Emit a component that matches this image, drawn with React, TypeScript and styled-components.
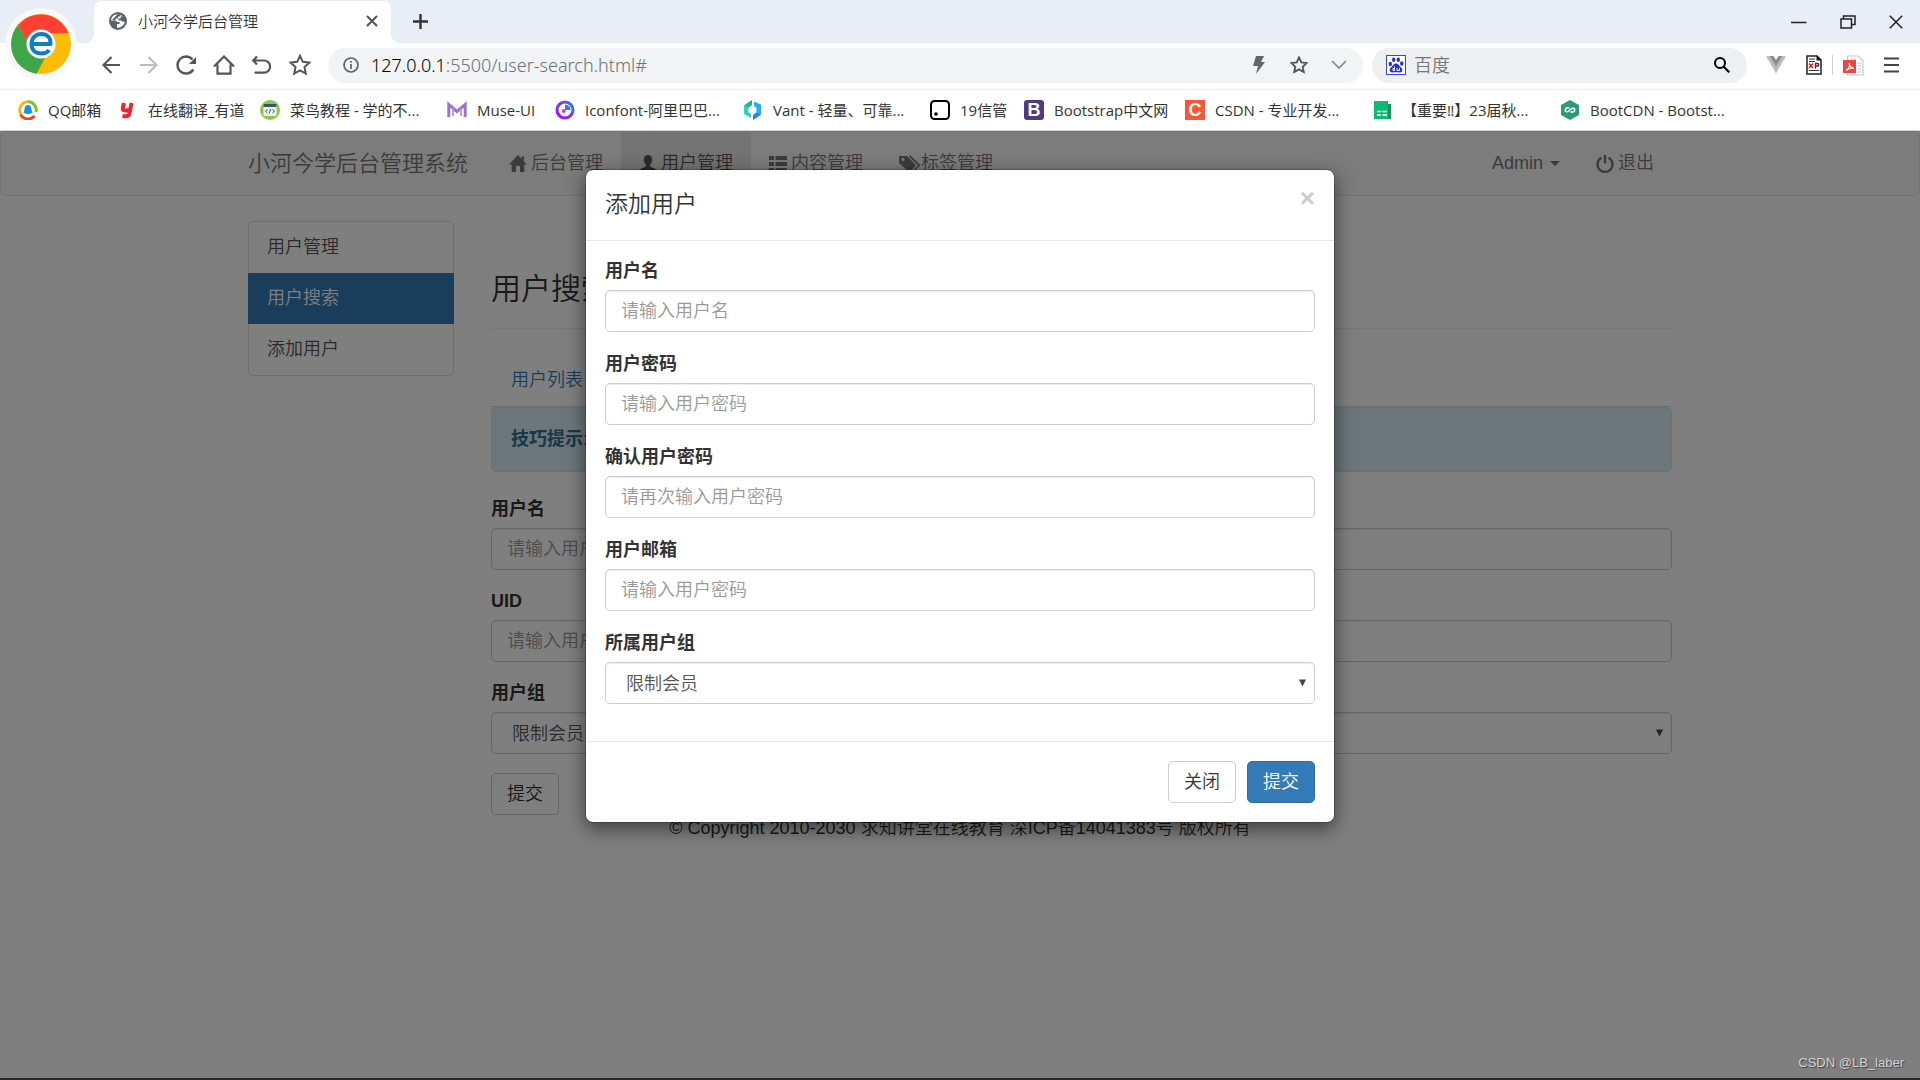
import React from "react";
import styled, { createGlobalStyle } from "styled-components";

const GlobalStyle = createGlobalStyle`
  *, *::before, *::after { box-sizing: border-box; }
  html, body { margin: 0; padding: 0; }
  body { background: #fff; }
  button, input, select { font: inherit; margin: 0; }
  svg { display: block; flex: none; }
`;

const uiFont = `"Open Sans", "Noto Sans CJK SC", sans-serif`;
const pageFont = `"Liberation Sans", "Noto Sans CJK SC", sans-serif`;

const Browser = styled.div`
  position: relative;
  min-height: 100vh;
  display: flex;
  flex-direction: column;
  font-family: ${uiFont};
  overflow: hidden;
`;

/* ---------- window chrome ---------- */

const LogoBadge = styled.div`
  position: absolute;
  z-index: 3;
  left: 5px;
  top: 8px;
  width: 72px;
  height: 72px;
  padding: 6px;
  border-radius: 50%;
  background: #f7f8fb;
`;

const TabStrip = styled.header`
  display: flex;
  align-items: flex-end;
  height: 43px;
  padding-left: 94px;
  background: #e9edf6;
`;

const BrowserTab = styled.div`
  position: relative;
  display: flex;
  align-items: center;
  width: 297px;
  height: 42px;
  padding: 0 13px 2px 15px;
  border-radius: 8px 8px 0 0;
  background: #fff;
  &::before,
  &::after {
    content: "";
    position: absolute;
    bottom: 0;
    width: 9px;
    height: 9px;
  }
  &::before {
    right: 100%;
    background: radial-gradient(circle at 0 0, transparent 9px, #fff 9px);
  }
  &::after {
    left: 100%;
    background: radial-gradient(circle at 100% 0, transparent 9px, #fff 9px);
  }
`;

const TabTitle = styled.span`
  flex: 1;
  margin-left: 11px;
  font-size: 15px;
  line-height: 20px;
  font-weight: 350;
  color: #333;
`;

const IconButton = styled.button<{ $w?: number }>`
  display: flex;
  align-items: center;
  justify-content: center;
  width: ${(p) => p.$w ?? 38}px;
  height: 36px;
  padding: 0;
  border: 0;
  background: transparent;
`;

const NewTab = styled(IconButton)`
  margin-left: 10px;
  height: 42px;
  padding-bottom: 2px;
`;

const WindowButtons = styled.div`
  display: flex;
  margin-left: auto;
  height: 42px;
  align-items: center;
`;

const Toolbar = styled.div`
  display: flex;
  align-items: center;
  height: 47px;
  padding: 0 11px 2px 92px;
  border-bottom: 1px solid #efefef;
  background: #fff;
`;

const Omnibox = styled.div`
  display: flex;
  flex: 1;
  align-items: center;
  height: 35px;
  margin-left: 9px;
  padding: 0 4px 0 15px;
  border-radius: 18px;
  background: #f1f3f4;
`;

const Url = styled.span`
  flex: 1;
  margin-left: 12px;
  font-family: "Noto Sans", sans-serif;
  font-size: 18px;
  line-height: 24px;
  font-weight: 300;
  color: #6c7278;
  b {
    font-weight: 300;
    color: #000;
  }
`;

const SearchBox = styled.label`
  display: flex;
  align-items: center;
  width: 375px;
  height: 35px;
  margin: 0 9px;
  padding: 0 5px 0 14px;
  border-radius: 18px;
  background: #eeeff1;
`;

const SearchInput = styled.input`
  flex: 1;
  min-width: 0;
  margin-left: 8px;
  padding: 0;
  border: 0;
  outline: 0;
  background: transparent;
  font-size: 18px;
  font-weight: 350;
  &::placeholder {
    color: #777;
    opacity: 1;
  }
`;

const ToolDivider = styled.i`
  width: 1px;
  height: 20px;
  background: #ccc;
`;

const Bookmarks = styled.nav`
  display: flex;
  align-items: center;
  height: 41px;
  padding-left: 18px;
  border-bottom: 1px solid #d5d5d5;
  background: #fff;
`;

const Bookmark = styled.a<{ $w: number }>`
  display: flex;
  align-items: center;
  flex: 0 0 ${(p) => p.$w}px;
  gap: 10px;
  font-size: 15px;
  line-height: 20px;
  font-weight: 400;
  white-space: nowrap;
  text-decoration: none;
  color: #333;
`;

/* ---------- page ---------- */

const Page = styled.main`
  position: relative;
  flex: 1;
  background: #fff;
  font-family: ${pageFont};
  font-size: 18px;
  line-height: 25px;
  font-weight: 350;
  color: #333;
`;

const Container = styled.div`
  max-width: 1462px;
  margin: 0 auto;
  padding: 0 19px;
`;

const Navbar = styled.nav`
  margin-bottom: 25px;
  border: 1px solid #e7e7e7;
  border-radius: 5px;
  background: #f8f8f8;
`;

const NavInner = styled(Container)`
  display: flex;
  align-items: stretch;
  height: 63px;
`;

const Brand = styled.a`
  display: flex;
  align-items: center;
  padding-right: 23px;
  font-size: 22px;
  text-decoration: none;
  white-space: nowrap;
  color: #777;
`;

const NavLink = styled.a<{ $active?: boolean }>`
  display: flex;
  align-items: center;
  gap: 4px;
  padding: 0 18px;
  text-decoration: none;
  white-space: nowrap;
  color: ${(p) => (p.$active ? "#555" : "#777")};
  background: ${(p) => (p.$active ? "#e7e7e7" : "transparent")};
`;

const NavRight = styled.div`
  display: flex;
  margin-left: auto;
`;

const Caret = styled.i`
  margin-left: 3px;
  border: 5px solid transparent;
  border-top-color: currentColor;
  border-bottom-width: 0;
`;

const Columns = styled(Container)`
  display: grid;
  grid-template-columns: 206px minmax(0, 1fr);
  gap: 37px;
  align-items: start;
`;

const ListGroup = styled.div`
  border: 1px solid #ddd;
  border-radius: 5px;
`;

const ListItem = styled.a<{ $active?: boolean }>`
  display: block;
  margin: 0 -1px;
  padding: 13px 19px;
  text-decoration: none;
  color: ${(p) => (p.$active ? "#fff" : "#555")};
  background: ${(p) => (p.$active ? "#337ab7" : "transparent")};
`;

const PageTitle = styled.h1`
  margin: 51px 0 26px;
  padding-bottom: 23px;
  border-bottom: 1px solid #eee;
  font-size: 30px;
  line-height: 33px;
  font-weight: 350;
`;

const Tabs = styled.div`
  display: flex;
  border-bottom: 1px solid #ddd;
`;

const TabLink = styled.a`
  padding: 13px 20px;
  text-decoration: none;
  color: #337ab7;
`;

const Alert = styled.div`
  margin-bottom: 25px;
  padding: 19px;
  border: 1px solid #bce8f1;
  border-radius: 5px;
  background: #d9edf7;
  font-weight: 700;
  color: #31708f;
`;

const Field = styled.div`
  margin-bottom: 19px;
`;

const Label = styled.label`
  display: block;
  margin-bottom: 6px;
  font-weight: 700;
`;

const TextInput = styled.input`
  display: block;
  width: 100%;
  height: 42px;
  padding: 0 15px;
  border: 1px solid #ccc;
  border-radius: 5px;
  background: #fff;
  box-shadow: inset 0 1px 1px rgba(0, 0, 0, 0.075);
  color: #555;
  &::placeholder {
    color: #999;
    opacity: 1;
  }
`;

const SelectWrap = styled.div`
  position: relative;
  svg {
    position: absolute;
    right: 9px;
    top: 17px;
    pointer-events: none;
  }
`;

const Select = styled.select`
  display: block;
  width: 100%;
  height: 42px;
  padding: 2px 20px 0;
  border: 1px solid #ccc;
  border-radius: 5px;
  appearance: none;
  background: #fff;
  box-shadow: inset 0 1px 1px rgba(0, 0, 0, 0.075);
  color: #555;
`;

const Button = styled.button<{ $primary?: boolean }>`
  height: 42px;
  padding: 0 15px;
  border: 1px solid ${(p) => (p.$primary ? "#2e6da4" : "#ccc")};
  border-radius: 5px;
  background: ${(p) => (p.$primary ? "#337ab7" : "#fff")};
  color: ${(p) => (p.$primary ? "#fff" : "#333")};
`;

const Footer = styled.footer`
  margin-top: 1px;
  text-align: center;
`;

/* ---------- dialog ---------- */

const Backdrop = styled.div`
  position: absolute;
  inset: 0;
  display: flex;
  justify-content: center;
  align-items: flex-start;
  padding-top: 38px;
  background: rgba(0, 0, 0, 0.5);
`;

const Dialog = styled.section`
  width: 750px;
  border: 1px solid rgba(0, 0, 0, 0.2);
  border-radius: 8px;
  background: #fff;
  background-clip: padding-box;
  box-shadow: 0 6px 19px rgba(0, 0, 0, 0.5);
`;

const DialogHeader = styled.div`
  display: flex;
  align-items: flex-start;
  justify-content: space-between;
  height: 71px;
  padding: 19px;
  border-bottom: 1px solid #e5e5e5;
`;

const DialogTitle = styled.h2`
  margin: 0;
  font-size: 23px;
  line-height: 31px;
  font-weight: 350;
`;

const CloseButton = styled.button`
  padding: 0;
  border: 0;
  background: transparent;
  font-size: 26px;
  line-height: 18px;
  font-weight: 700;
  color: #ccc;
`;

const DialogBody = styled.div`
  padding: 18px 19px 17px;
  ${Field} { margin-bottom: 20px; }
`;

const DialogFooter = styled.div`
  display: flex;
  justify-content: flex-end;
  gap: 11px;
  padding: 19px;
  border-top: 1px solid #e5e5e5;
`;

const Watermark = styled.span`
  position: absolute;
  right: 16px;
  bottom: 5px;
  font-size: 13px;
  line-height: 20px;
  color: #d2d2d2;
  text-shadow: 1px 1px 1px #444;
`;

const Taskbar = styled.div`
  height: 2px;
  background: #29292c;
`;

/* ---------- icons ---------- */

const stroke = (color: string, width = 2) => ({
  fill: "none",
  stroke: color,
  strokeWidth: width,
});

const STAR = "M11 1.8l2.8 6 6.6.8-4.9 4.5 1.3 6.5L11 16.400l-5.800 3.200 1.300-6.500L1.600 8.600l6.600-.8z";

const BrowserLogo = () => (
  <svg width="60" height="60" viewBox="0 0 60 60">
    <circle cx="30" cy="30" r="30" fill="#fbbc05" />
    <path d="M7 11A30 30 0 0 1 57.500 19H30L16 27z" fill="#ff4033" />
    <path d="M7 11A30 30 0 0 0 25.500 59.700L34 44 16 27z" fill="#3fa648" />
    <circle cx="30" cy="30" r="14.500" fill="#fff" />
    <path d="M20.500 30H39.500M39.300 31.500C40.500 23.500 36 20 30.300 20 24.500 20 20.500 24 20.500 30S24.500 39.500 30.500 39.500C34 39.500 36.500 38.500 38 36" {...stroke("#0b7fc0", 4)} />
  </svg>
);

const Globe = () => (
  <svg width="18" height="18" viewBox="0 0 18 18">
    <circle cx="9" cy="9" r="9" fill="#5f6368" />
    <path d="M8.500 2.200C5 2 2.200 5 2.100 8.500H6.500C7.500 8.500 7.500 10 8.500 10H10.500V12H8V15.700C12 16.200 15.500 13 15.700 9.800H13.500L12 8.500H9.500V6.500C11.500 6.500 12 6 12 4.200L14 4.500C12.500 3 10.500 2.200 8.500 2.200z" fill="#fff" />
    <path d="M8.500 2.200H11.500V4.500H9V6.500H6.500V8H3z" fill="#5f6368" />
  </svg>
);

const QQMail = () => (
  <svg width="20" height="20" viewBox="0 0 20 20">
    <path d="M3.500 15A8.200 8.200 0 0 1 9.500 1.800" {...stroke("#fdb515", 3)} />
    <path d="M9.500 1.800A8.200 8.200 0 0 1 18 12" {...stroke("#7cc51f", 3)} />
    <path d="M2.500 14.500A8.500 8.500 0 0 0 16.500 16" {...stroke("#fb4412", 3)} />
    <path d="M10 5C7 5 6.500 8 6.400 10L5.300 13.300H7.500C8.500 14.500 11.500 14.500 12.500 13.300H14.700L13.600 10C13.500 8 13 5 10 5z" fill="#1793df" />
  </svg>
);

const Youdao = () => (
  <svg width="20" height="20" viewBox="0 0 20 20">
    <path d="M6 3L4.800 8.200C4.500 10.500 7 11 11.200 10M13.600 3L11.300 14C11 16.500 8 16.600 4.500 16" {...stroke("#ef2433", 4)} />
  </svg>
);

const Runoob = () => (
  <svg width="20" height="20" viewBox="0 0 20 20">
    <circle cx="10" cy="10" r="10" fill="#8cc84b" />
    <rect x="3.500" y="4" width="13" height="12" rx="1" fill="#eef3ee" />
    <rect x="3.500" y="4" width="13" height="3" fill="#3b5563" />
    <path d="M7.500 9.500L5.500 11.200 7.500 13M12.500 9.500L14.500 11.200 12.500 13M10.800 9L9.200 13.500" {...stroke("#3b5563", 1)} />
  </svg>
);

const Muse = () => (
  <svg width="20" height="20" viewBox="0 0 20 20">
    <path d="M1.800 17V4.500L10 11.500 18.200 4.500V17" {...stroke("#9a72cf", 3)} />
    <path d="M6 16V8.500M14 16V8.500" {...stroke("#b79be0", 2)} />
  </svg>
);

const Iconfont = () => (
  <svg width="20" height="20" viewBox="0 0 20 20">
    <defs>
      <linearGradient id="iconfontRing" x1="0" y1="1" x2="1" y2="0">
        <stop offset="0" stopColor="#b400ff" />
        <stop offset="1" stopColor="#2c7bf2" />
      </linearGradient>
    </defs>
    <circle cx="10" cy="10" r="8" {...stroke("url(#iconfontRing)", 3)} />
    <path d="M10 4.500V10H15.500A5.500 5.500 0 0 0 10 4.500z" fill="#2c7bf2" />
    <circle cx="8.700" cy="11" r="2" fill="#ff2fa8" />
  </svg>
);

const Vant = () => (
  <svg width="20" height="20" viewBox="0 0 20 20">
    <path d="M1 5.500L9 0V5L5.500 7.500V12L8 14V18L1 14z" fill="#35d2b0" />
    <path d="M18 4.500V14.500L10 20V15L13.500 12.500V8L11 6V1.500z" fill="#22aef5" />
    <path d="M1 5.500L9 0V5L5.500 7.500z" fill="#18b98f" />
    <path d="M10 20V15L13.500 12.500 18 14.500z" fill="#2a86dd" />
  </svg>
);

const BoxDot = () => (
  <svg width="20" height="20" viewBox="0 0 20 20">
    <rect x="1" y="1" width="18" height="18" rx="3.500" {...stroke("#000")} />
    <circle cx="6" cy="14" r="1.800" />
  </svg>
);

const LetterTile = styled.span<{ $bg: string; $r: number }>`
  width: 20px;
  height: 20px;
  border-radius: ${(p) => p.$r}px;
  background: ${(p) => p.$bg};
  font-family: "Liberation Sans", sans-serif;
  font-size: 18px;
  line-height: 20px;
  font-weight: 700;
  text-align: center;
  color: #fff;
`;

const Sheet = () => (
  <svg width="20" height="20" viewBox="0 0 20 20">
    <path d="M2 1H16V4H19V19H2z" fill="#0a9a56" />
    <path d="M2 1H16V19H2z" fill="#0cbb78" />
    <path d="M5 11.500H9M10.500 11.500H15M5 15H9M10.500 15H15" {...stroke("#fff", 1.5)} />
  </svg>
);

const BootCdn = () => (
  <svg width="20" height="20" viewBox="0 0 20 20">
    <path d="M10 0L19 5V15L10 20 1 15V5z" fill="#2a9b77" />
    <path d="M9.500 8C7 7 5 8.500 5.200 10.300 5.500 12.300 8 12 10 10S14.300 7.700 14.800 9.500C15.200 11.300 13 12.500 10.500 11.800" {...stroke("#fff", 1.5)} />
  </svg>
);

const Baidu = () => (
  <svg width="20" height="20" viewBox="0 0 20 20">
    <rect x="0.500" y="0.500" width="19" height="19" fill="#fff" stroke="#3742e6" />
    <g fill="#2530e0">
      <ellipse cx="4.300" cy="9" rx="1.700" ry="2.200" />
      <ellipse cx="7.700" cy="4.700" rx="1.700" ry="2.300" />
      <ellipse cx="12.300" cy="4.700" rx="1.700" ry="2.300" />
      <ellipse cx="15.800" cy="8.500" rx="1.700" ry="2.200" />
      <path d="M10 8.500C7.500 8.500 7 11 5.200 12.300 2.500 14.500 4 18 6.500 17.500 9 17 11 17 13.500 17.500 16.500 18 17.500 14.500 14.800 12.300 13 11 12.500 8.500 10 8.500z" />
    </g>
    <path d="M8.500 11.500V15.500H7V13.500H8.500M11 13V15.500H13.500V13" {...stroke("#fff", 1)} />
  </svg>
);

const Home = () => (
  <svg width="18" height="18" viewBox="0 0 18 18" fill="currentColor">
    <path d="M9 0L18 9.500H15.300V17H11V11H7V17H2.700V9.500H0z" />
    <path d="M12.500 1.500H15V6L12.500 4z" />
  </svg>
);
const UserIcon = () => (
  <svg width="18" height="18" viewBox="0 0 18 18" fill="currentColor">
    <path d="M9 0C11.500 0 13.200 1.700 13.200 4.500 13.200 6.500 12.500 8.200 11 9.500V11.500C14 13 18 14 18 17H0C0 14 4 13 7 11.500V9.500C5.500 8.200 4.800 6.500 4.800 4.500 4.800 1.700 6.500 0 9 0z" />
  </svg>
);
const ListIcon = () => (
  <svg width="18" height="18" viewBox="0 0 18 18" fill="currentColor">
    <path d="M0 1H5V5H0zM6.500 1H18V5H6.500zM0 7H5V11H0zM6.500 7H18V11H6.500zM0 13H5V17H0zM6.500 13H18V17H6.500z" />
  </svg>
);
const TagsIcon = () => (
  <svg width="18" height="18" viewBox="0 0 18 18" overflow="visible">
    <path fill="currentColor" fillRule="evenodd" d="M0 1H8L17 10 10.500 17.500 0 8zM4 2.800A1.600 1.600 0 1 0 4 6 1.600 1.600 0 1 0 4 2.800z" />
    <path d="M10.500 1L20.300 10 13.500 17.200" {...stroke("currentColor", 1.7)} />
  </svg>
);
const PowerIcon = () => (
  <svg width="18" height="18" viewBox="0 0 18 18">
    <path d="M5.500 2.800A7.500 7.500 0 1 0 12.500 2.800M9 0V8.500" {...stroke("currentColor", 2.4)} />
  </svg>
);

const Arrow = () => (
  <svg width="7" height="8" viewBox="0 0 7 8">
    <path d="M0 0.500H7L3.500 7.500z" fill="#444" />
  </svg>
);

/* ---------- data ---------- */

const bookmarks: { text: string; w: number; icon: React.ReactNode }[] = [
  { text: "QQ邮箱", w: 100, icon: <QQMail /> },
  { text: "在线翻译_有道", w: 142, icon: <Youdao /> },
  { text: "菜鸟教程 - 学的不...", w: 187, icon: <Runoob /> },
  { text: "Muse-UI", w: 108, icon: <Muse /> },
  { text: "Iconfont-阿里巴巴...", w: 188, icon: <Iconfont /> },
  { text: "Vant - 轻量、可靠...", w: 187, icon: <Vant /> },
  { text: "19信管", w: 94, icon: <BoxDot /> },
  { text: "Bootstrap中文网", w: 161, icon: <LetterTile $bg="#523a7e" $r={3}>B</LetterTile> },
  { text: "CSDN - 专业开发...", w: 187, icon: <LetterTile $bg="#fc5531" $r={0}>C</LetterTile> },
  { text: "【重要‼】23届秋...", w: 188, icon: <Sheet /> },
  { text: "BootCDN - Bootst...", w: 187, icon: <BootCdn /> },
];

type FieldSpec = { id: string; label: string; placeholder?: string; type?: string };

const searchFields: FieldSpec[] = [
  { id: "search-name", label: "用户名", placeholder: "请输入用户名" },
  { id: "search-uid", label: "UID", placeholder: "请输入用户UID" },
  { id: "search-group", label: "用户组" },
];

const addFields: FieldSpec[] = [
  { id: "add-name", label: "用户名", placeholder: "请输入用户名" },
  { id: "add-password", label: "用户密码", placeholder: "请输入用户密码", type: "password" },
  { id: "add-confirm", label: "确认用户密码", placeholder: "请再次输入用户密码", type: "password" },
  { id: "add-mail", label: "用户邮箱", placeholder: "请输入用户密码", type: "email" },
  { id: "add-group", label: "所属用户组" },
];

const FormField = ({ id, label, placeholder, type }: FieldSpec) => (
  <Field>
    <Label htmlFor={id}>{label}</Label>
    {placeholder ? (
      <TextInput id={id} type={type ?? "text"} placeholder={placeholder} />
    ) : (
      <SelectWrap>
        <Select id={id}>
          <option>限制会员</option>
        </Select>
        <Arrow />
      </SelectWrap>
    )}
  </Field>
);

const Chrome = () => (
  <>
    <LogoBadge><BrowserLogo /></LogoBadge>
    <TabStrip>
      <BrowserTab>
        <Globe />
        <TabTitle>小河今学后台管理</TabTitle>
        <IconButton $w={12} aria-label="close tab">
          <svg width="12" height="12" viewBox="0 0 12 12"><path d="M1 1L11 11M11 1L1 11" {...stroke("#555")} /></svg>
        </IconButton>
      </BrowserTab>
      <NewTab aria-label="new tab">
        <svg width="15" height="15" viewBox="0 0 15 15"><path d="M7.500 0V15M0 7.500H15" {...stroke("#333", 2.400)} /></svg>
      </NewTab>
      <WindowButtons>
        <IconButton $w={48} aria-label="minimise">
          <svg width="16" height="16" viewBox="0 0 16 16"><path d="M0 8.500H15.500" {...stroke("#222", 1.500)} /></svg>
        </IconButton>
        <IconButton $w={49} aria-label="restore">
          <svg width="16" height="14" viewBox="0 0 16 14"><path d="M1 4H11.500V13H1zM3.500 4V1H15V9.500H11.500" {...stroke("#222", 1.500)} /></svg>
        </IconButton>
        <IconButton $w={48} aria-label="close window">
          <svg width="14" height="14" viewBox="0 0 14 14"><path d="M.8.8L13.200 13.200M13.200.8L.8 13.200" {...stroke("#222", 1.500)} /></svg>
        </IconButton>
      </WindowButtons>
    </TabStrip>
    <Toolbar>
      <IconButton aria-label="back">
        <svg width="18" height="18" viewBox="0 0 18 18"><path d="M9.500 1L1.500 9 9.500 17M1.500 9H18" {...stroke("#555", 2.200)} /></svg>
      </IconButton>
      <IconButton $w={37} aria-label="forward">
        <svg width="18" height="18" viewBox="0 0 18 18"><path d="M8.500 1L16.500 9 8.500 17M16.500 9H0" {...stroke("#bbb", 2.200)} /></svg>
      </IconButton>
      <IconButton $w={38} aria-label="reload">
        <svg width="21" height="20" viewBox="0 0 21 20"><path d="M17.300 14.500A8.500 8.500 0 1 1 16.500 4.500" {...stroke("#555", 2.400)} /><path d="M20 2V9H13z" fill="#555" /></svg>
      </IconButton>
      <IconButton $w={37} aria-label="home">
        <svg width="22" height="20" viewBox="0 0 22 20"><path d="M1 11.500L11 1.500 21 11.500M4.500 9.500V18.700H17.500V9.500" {...stroke("#555", 2.200)} /></svg>
      </IconButton>
      <IconButton $w={38} aria-label="undo">
        <svg width="20" height="20" viewBox="0 0 20 20"><path d="M6 1.500L2.200 5.500 6 9.500M2.200 5.500H13A6 6 0 0 1 13 17.700H3.500" {...stroke("#555", 2.200)} /></svg>
      </IconButton>
      <IconButton $w={39} aria-label="favourites">
        <svg width="22" height="22" viewBox="0 0 22 22"><path d={STAR} {...stroke("#555")} /></svg>
      </IconButton>
      <Omnibox>
        <svg width="16" height="16" viewBox="0 0 16 16"><circle cx="8" cy="8" r="7" {...stroke("#5f6368", 1.700)} /><path d="M8 7V12M8 4V5.700" {...stroke("#5f6368", 1.700)} /></svg>
        <Url><b>127.0.0.1</b>:5500/user-search.html#</Url>
        <IconButton $w={40} aria-label="speed mode">
          <svg width="14" height="18" viewBox="0 0 14 18"><path d="M4 0H12L9 6H13L4 18 6 10H1z" fill="#666" /></svg>
        </IconButton>
        <IconButton $w={40} aria-label="bookmark">
          <svg width="18" height="18" viewBox="0 0 22 22"><path d={STAR} {...stroke("#555", 2.300)} /></svg>
        </IconButton>
        <IconButton $w={40} aria-label="more">
          <svg width="16" height="10" viewBox="0 0 16 10"><path d="M1 1L8 8 15 1" {...stroke("#888", 1.700)} /></svg>
        </IconButton>
      </Omnibox>
      <SearchBox>
        <Baidu />
        <SearchInput placeholder="百度" aria-label="百度" />
        <IconButton $w={40} aria-label="search">
          <svg width="16" height="16" viewBox="0 0 16 16"><circle cx="6" cy="6" r="5" {...stroke("#000")} /><path d="M9.500 9.500L15.300 15.300" {...stroke("#000", 2.200)} /></svg>
        </IconButton>
      </SearchBox>
      <IconButton $w={40} aria-label="vue">
        <svg width="20" height="18" viewBox="0 0 20 18"><path d="M0 0H20L10 17.500z" fill="#bdbdbd" /><path d="M4 0H16L10 10.500z" fill="#8c8c8c" /><path d="M7.500 0H12.500L10 4z" fill="#fff" /></svg>
      </IconButton>
      <IconButton $w={36} aria-label="xpath">
        <svg width="16" height="20" viewBox="0 0 16 20"><path d="M1 1H11L15 5V19H1z" fill="#fff" stroke="#222" strokeWidth="1.500" /><path d="M10.500 0.500V5.500H15.500z" fill="#111" /><path d="M3 4H9M3 6.500H9M3 15.500H13" {...stroke("#333", 1)} /><path d="M3 8.500L7 13M7 8.500L3 13" {...stroke("#e01818", 1.500)} /><path d="M9.500 13.500V8.500H11.500C13.300 8.500 13.300 11 11.500 11H9.500" {...stroke("#5c2222", 1.300)} /></svg>
      </IconButton>
      <ToolDivider />
      <IconButton $w={40} aria-label="pdf">
        <svg width="21" height="21" viewBox="0 0 21 21"><path d="M4.500 1H15L20 6V20H4.500z" fill="#fff" stroke="#c5c8cb" strokeWidth="1.200" /><path d="M8 4H13M14.500 8H18M14.500 11H18M14.500 14H18M14.500 17H18" {...stroke("#bbb", 1.200)} /><rect y="5" width="13" height="13" fill="#ee4444" /><path d="M3 15.500C6 13.500 7 10.500 6.300 8 6.500 11 8 13 11 13.300 8 13 5.500 13.500 3 15.500z" {...stroke("#fff", 1.200)} /></svg>
      </IconButton>
      <IconButton $w={36} aria-label="menu">
        <svg width="15" height="16" viewBox="0 0 15 16"><path d="M0 1.500H15M0 8H15M0 14.500H15" {...stroke("#444", 2.200)} /></svg>
      </IconButton>
    </Toolbar>
    <Bookmarks>
      {bookmarks.map((b) => (
        <Bookmark key={b.text} href="#" $w={b.w}>{b.icon}{b.text}</Bookmark>
      ))}
    </Bookmarks>
  </>
);

export default function App() {
  return (
    <>
      <GlobalStyle />
      <Browser>
        <Chrome />
        <Page>
          <Navbar>
            <NavInner>
              <Brand href="#">小河今学后台管理系统</Brand>
              <NavLink href="#"><Home />后台管理</NavLink>
              <NavLink href="#" $active><UserIcon />用户管理</NavLink>
              <NavLink href="#"><ListIcon />内容管理</NavLink>
              <NavLink href="#"><TagsIcon />标签管理</NavLink>
              <NavRight>
                <NavLink href="#">Admin <Caret /></NavLink>
                <NavLink href="#"><PowerIcon />退出</NavLink>
              </NavRight>
            </NavInner>
          </Navbar>
          <Columns>
            <ListGroup>
              <ListItem href="#">用户管理</ListItem>
              <ListItem href="#" $active>用户搜索</ListItem>
              <ListItem href="#">添加用户</ListItem>
            </ListGroup>
            <div>
              <PageTitle>用户搜索</PageTitle>
              <Tabs><TabLink href="#">用户列表</TabLink></Tabs>
              <Alert>技巧提示:</Alert>
              {searchFields.map((f) => <FormField key={f.id} {...f} />)}
              <Button type="button">提交</Button>
            </div>
          </Columns>
          <Footer>© Copyright 2010-2030 求知讲堂在线教育 深ICP备14041383号 版权所有</Footer>
          <Backdrop>
            <Dialog role="dialog" aria-labelledby="dialog-title">
              <DialogHeader>
                <DialogTitle id="dialog-title">添加用户</DialogTitle>
                <CloseButton aria-label="close">×</CloseButton>
              </DialogHeader>
              <DialogBody>
                {addFields.map((f) => <FormField key={f.id} {...f} />)}
              </DialogBody>
              <DialogFooter>
                <Button type="button">关闭</Button>
                <Button type="button" $primary>提交</Button>
              </DialogFooter>
            </Dialog>
          </Backdrop>
          <Watermark>CSDN @LB_laber</Watermark>
        </Page>
        <Taskbar />
      </Browser>
    </>
  );
}
